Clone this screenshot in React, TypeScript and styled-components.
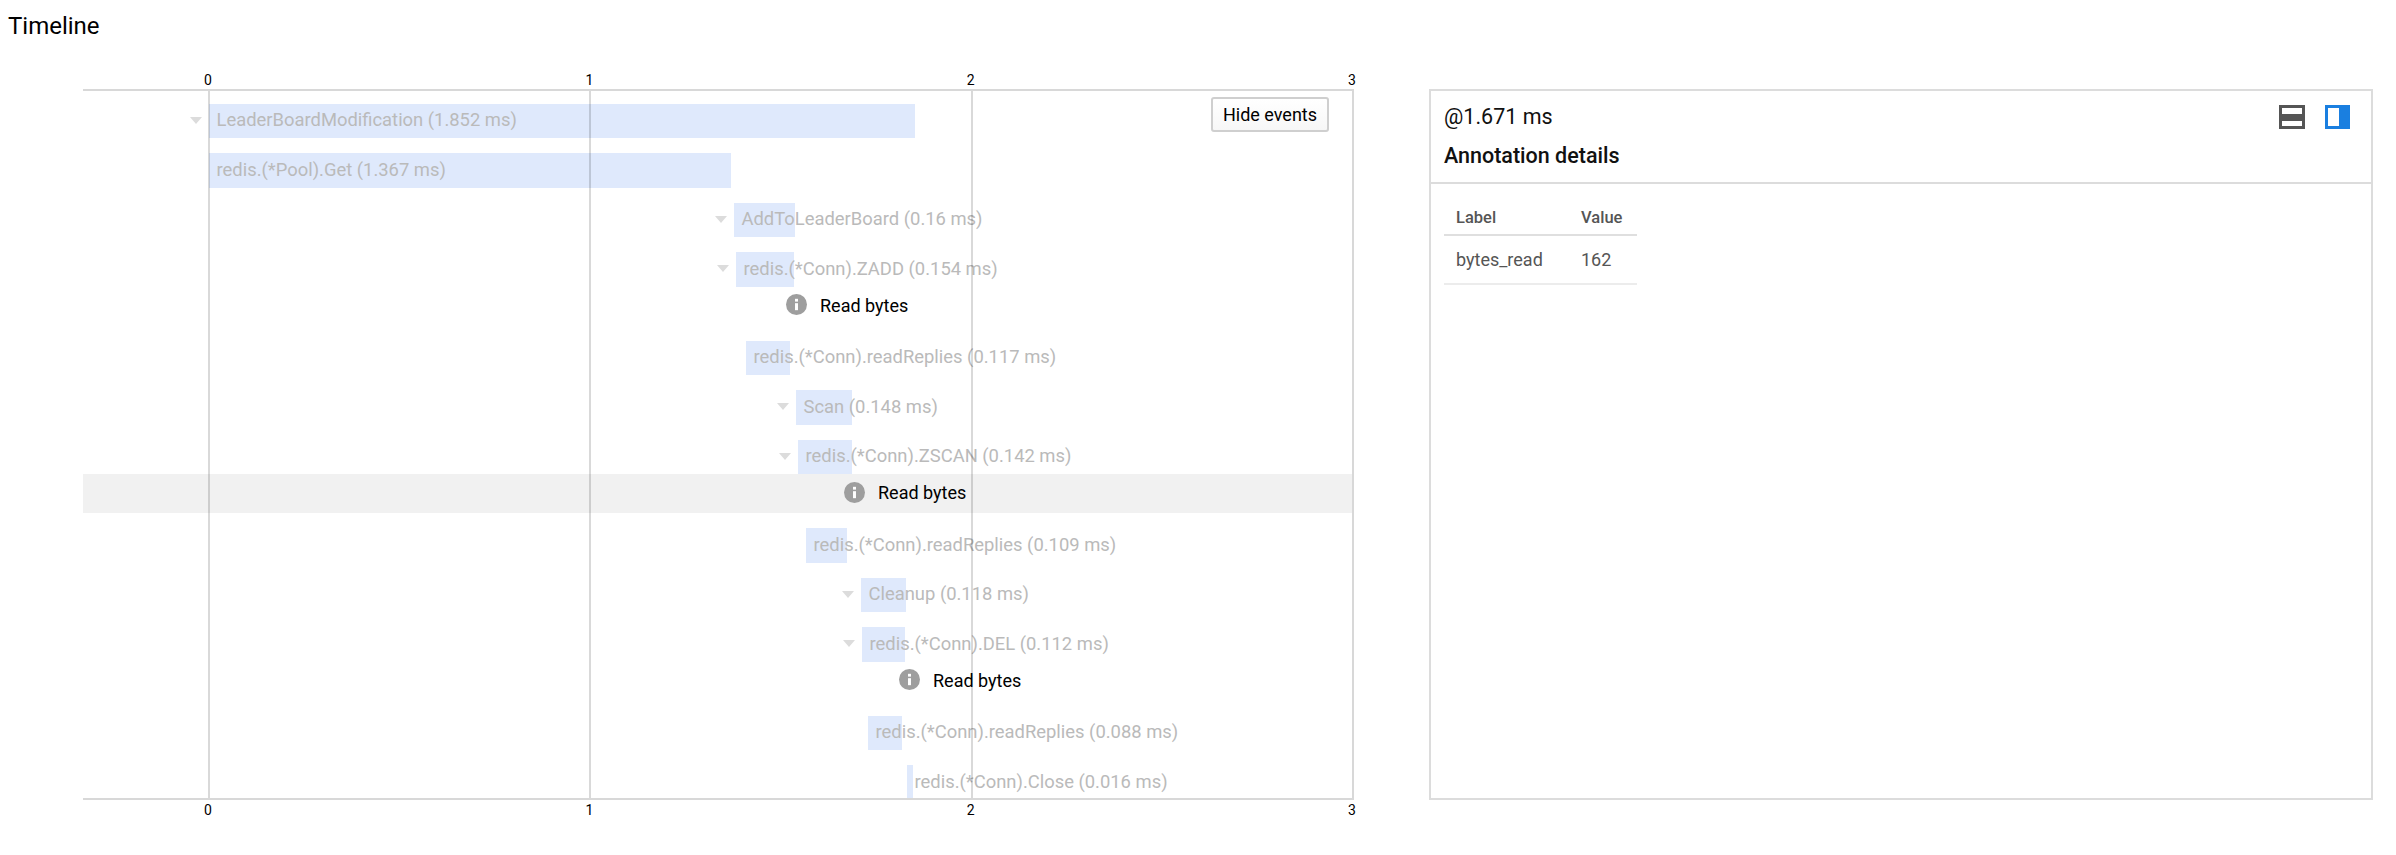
import React from 'react';
import styled, { createGlobalStyle } from 'styled-components';

const Global = createGlobalStyle`
  html, body { margin: 0; padding: 0; background: #fff; }
  body { font-family: Roboto, "Liberation Sans", sans-serif; color: #000; }
`;

const Page = styled.div`
  width: 2396px;
  height: 855px;
  overflow: hidden;
`;

const Title = styled.h1`
  margin: 0;
  padding-left: 8px;
  height: 52px;
  line-height: 52px;
  font-size: 24px;
  font-weight: 400;
`;

const Main = styled.div`
  display: flex;
  align-items: flex-start;
  padding-left: 83px;
  gap: 75px;
`;

const TimelineColumn = styled.div`
  width: 1271px;
`;

const Axis = styled.div<{ $bottom?: boolean }>`
  display: flex;
  justify-content: space-between;
  height: ${p => (p.$bottom ? 20 : 37)}px;
  padding: 0 2px 0 125px;
  align-items: ${p => (p.$bottom ? 'center' : 'flex-end')};
  font-size: 14px;
  line-height: 18px;
`;

const Tick = styled.span`
  width: 0;
  display: flex;
  justify-content: center;
`;

const Chart = styled.div`
  position: relative;
  box-sizing: border-box;
  height: 711px;
  padding-top: 12.7px;
  border-top: 2px solid #d8d8d8;
  border-bottom: 2px solid #d8d8d8;
  border-right: 2px solid #d8d8d8;
  overflow: hidden;
`;

const GridOverlay = styled.div`
  position: absolute;
  inset: 0 -2px 0 125px;
  display: flex;
  justify-content: space-between;
  pointer-events: none;
  z-index: 2;
`;

const GridLine = styled.div`
  width: 2px;
  background: rgba(0, 0, 0, 0.15);
`;

const SpanGroup = styled.div`
  margin-bottom: 15px;
`;

const SpanRow = styled.div`
  display: flex;
  height: 34.5px;
`;

const Bar = styled.div`
  position: relative;
  flex: none;
  height: 100%;
  background: #dfe9fc;
`;

const BarLabel = styled.span`
  position: absolute;
  left: 7.5px;
  top: -0.5px;
  line-height: 34.5px;
  font-size: 18.4px;
  color: #bababa;
  white-space: nowrap;
`;

const Caret = styled.span`
  position: absolute;
  right: calc(100% + 7px);
  top: 13px;
  width: 0;
  height: 0;
  border-left: 6.5px solid transparent;
  border-right: 6.5px solid transparent;
  border-top: 7px solid #dcdcdc;
`;

const Annotation = styled.div<{ $active?: boolean }>`
  display: flex;
  align-items: center;
  height: 39px;
  background: ${p => (p.$active ? '#f1f1f1' : 'transparent')};
`;

const InfoIcon = styled.svg`
  flex: none;
  width: 21px;
  height: 21px;
  margin-top: -3px;
`;

const AnnotationText = styled.span`
  margin-left: 13px;
  font-size: 18px;
  white-space: nowrap;
  margin-top: -2px;
`;

const HideButton = styled.button`
  position: absolute;
  top: 6px;
  right: 23px;
  width: 118px;
  height: 35px;
  box-sizing: border-box;
  padding: 0;
  border: 2px solid #cfcfcf;
  border-radius: 3px;
  background: linear-gradient(#ffffff, #f7f7f7);
  font-family: inherit;
  font-size: 18px;
  color: #000;
  z-index: 3;
`;

const DetailPanel = styled.section`
  box-sizing: border-box;
  margin-top: 37px;
  width: 944px;
  height: 711px;
  border: 2px solid #dcdcdc;
`;

const DetailHeader = styled.header`
  box-sizing: border-box;
  height: 93px;
  padding: 12px 13px 0;
  border-bottom: 2px solid #dcdcdc;
  display: flex;
  justify-content: space-between;
`;

const HeaderText = styled.div`
  display: flex;
  flex-direction: column;
`;

const Timestamp = styled.div`
  font-size: 21.5px;
  line-height: 28px;
  color: #111;
`;

const DetailTitle = styled.h2`
  margin: 12px 0 0;
  font-size: 21.5px;
  line-height: 26px;
  font-weight: 500;
  color: #111;
`;

const LayoutIcons = styled.div`
  display: flex;
  gap: 20px;
  padding: 2px 8px 0 0;
  height: 24px;
`;

const LayoutIcon = styled.svg`
  display: block;
  height: 24px;
`;

const DetailBody = styled.div`
  padding: 17px 13px;
`;

const Table = styled.table`
  border-collapse: collapse;
  width: 193px;
  color: #555;
  table-layout: fixed;
`;

const Th = styled.th<{ $w: number }>`
  width: ${p => p.$w}px;
  height: 34px;
  box-sizing: border-box;
  padding: 0 0 0 12px;
  text-align: left;
  font-size: 16.5px;
  font-weight: 500;
  border-bottom: 2px solid #dfdfdf;
`;

const Td = styled.td`
  height: 49px;
  box-sizing: border-box;
  padding: 0 0 0 12px;
  font-size: 18px;
  border-bottom: 2px solid #ececec;
`;

type Row = {
  x: number;
  w: number;
  label: string;
  caret?: boolean;
  note?: { x: number; active?: boolean };
};

const ORIGIN = 83;

const rows: Row[] = [
  { x: 209, w: 706, label: 'LeaderBoardModification (1.852 ms)', caret: true },
  { x: 209, w: 522, label: 'redis.(*Pool).Get (1.367 ms)' },
  { x: 734, w: 61, label: 'AddToLeaderBoard (0.16 ms)', caret: true },
  { x: 736, w: 58, label: 'redis.(*Conn).ZADD (0.154 ms)', caret: true, note: { x: 786 } },
  { x: 746, w: 44, label: 'redis.(*Conn).readReplies (0.117 ms)' },
  { x: 796, w: 56, label: 'Scan (0.148 ms)', caret: true },
  { x: 798, w: 54, label: 'redis.(*Conn).ZSCAN (0.142 ms)', caret: true, note: { x: 844, active: true } },
  { x: 806, w: 41, label: 'redis.(*Conn).readReplies (0.109 ms)' },
  { x: 861, w: 45, label: 'Cleanup (0.118 ms)', caret: true },
  { x: 862, w: 43, label: 'redis.(*Conn).DEL (0.112 ms)', caret: true, note: { x: 899 } },
  { x: 868, w: 34, label: 'redis.(*Conn).readReplies (0.088 ms)' },
  { x: 907, w: 6, label: 'redis.(*Conn).Close (0.016 ms)' },
];

const ticks = ['0', '1', '2', '3'];

const Info = ({ left }: { left: number }) => (
  <InfoIcon viewBox="0 0 24 24" style={{ marginLeft: left }}>
    <circle cx="12" cy="12" r="12" fill="#9e9e9e" />
    <rect x="10.3" y="10.5" width="3.4" height="8" fill="#fff" />
    <rect x="10.3" y="5.5" width="3.4" height="3.2" fill="#fff" />
  </InfoIcon>
);

export default function App() {
  return (
    <Page>
      <Global />
      <Title>Timeline</Title>
      <Main>
        <TimelineColumn>
          <Axis>
            {ticks.map(t => (
              <Tick key={t}>{t}</Tick>
            ))}
          </Axis>
          <Chart>
            <GridOverlay>
              {ticks.map(t => (
                <GridLine key={t} />
              ))}
            </GridOverlay>
            <HideButton>Hide events</HideButton>
            {rows.map(r => (
              <SpanGroup key={r.label}>
                <SpanRow>
                  <Bar style={{ marginLeft: r.x - ORIGIN, width: r.w }}>
                    {r.caret && <Caret />}
                    <BarLabel>{r.label}</BarLabel>
                  </Bar>
                </SpanRow>
                {r.note && (
                  <Annotation $active={r.note.active}>
                    <Info left={r.note.x - ORIGIN} />
                    <AnnotationText>Read bytes</AnnotationText>
                  </Annotation>
                )}
              </SpanGroup>
            ))}
          </Chart>
          <Axis $bottom>
            {ticks.map(t => (
              <Tick key={t}>{t}</Tick>
            ))}
          </Axis>
        </TimelineColumn>
        <DetailPanel>
          <DetailHeader>
            <HeaderText>
              <Timestamp>@1.671 ms</Timestamp>
              <DetailTitle>Annotation details</DetailTitle>
            </HeaderText>
            <LayoutIcons>
              <LayoutIcon viewBox="0 0 26 24" width="26">
                <rect width="26" height="24" fill="#555" />
                <rect x="3" y="3" width="20" height="6" fill="#fff" />
                <rect x="3" y="16" width="20" height="5" fill="#fff" />
              </LayoutIcon>
              <LayoutIcon viewBox="0 0 25 24" width="25">
                <rect width="25" height="24" fill="#1a7fe0" />
                <rect x="3" y="3" width="11" height="18" fill="#fff" />
              </LayoutIcon>
            </LayoutIcons>
          </DetailHeader>
          <DetailBody>
            <Table>
              <thead>
                <tr>
                  <Th $w={125}>Label</Th>
                  <Th $w={68}>Value</Th>
                </tr>
              </thead>
              <tbody>
                <tr>
                  <Td>bytes_read</Td>
                  <Td>162</Td>
                </tr>
              </tbody>
            </Table>
          </DetailBody>
        </DetailPanel>
      </Main>
    </Page>
  );
}
